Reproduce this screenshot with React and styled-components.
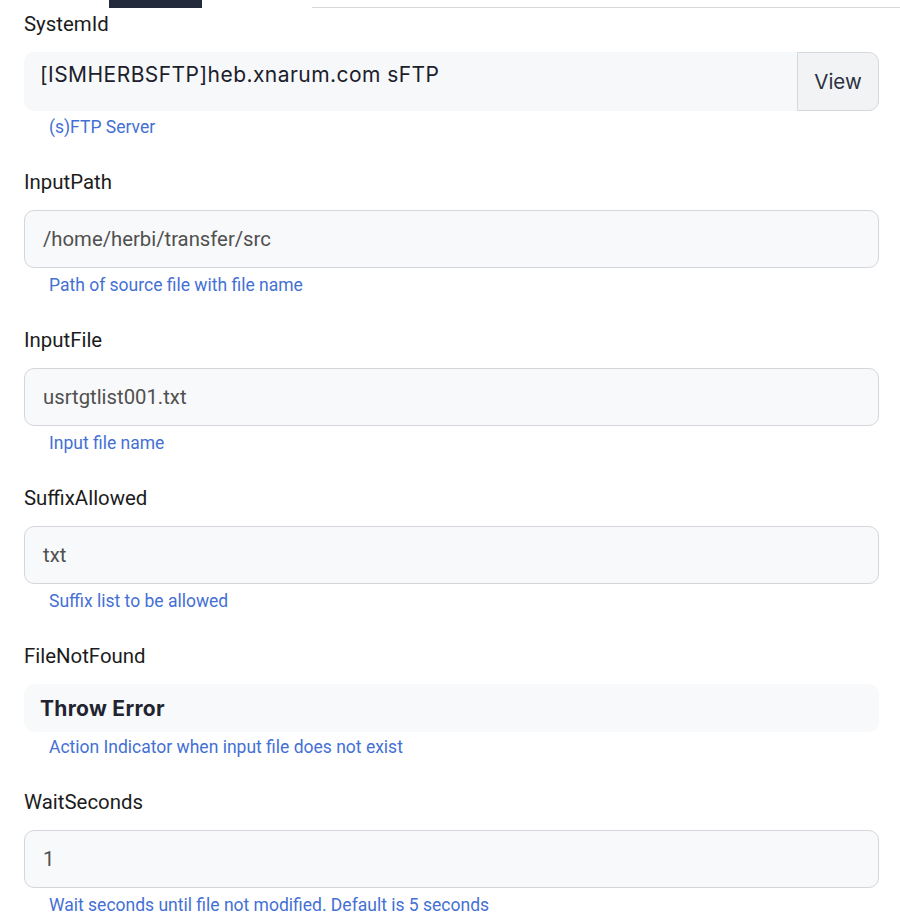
import React from "react";
import styled, { createGlobalStyle } from "styled-components";

const Global = createGlobalStyle`
  html, body { margin: 0; padding: 0; background: #ffffff; }
  body { font-family: Roboto, "Liberation Sans", sans-serif; }
`;

const Page = styled.div`
  width: 900px;
  box-sizing: border-box;
`;

const TabStrip = styled.div`
  display: flex;
  align-items: stretch;
  height: 8px;
  padding-left: 109px;
`;

const ActiveTab = styled.div`
  width: 93px;
  background: #222a3c;
`;

const TabLine = styled.div`
  flex: 1;
  margin-left: 110px;
  border-bottom: 1px solid #d6d8dc;
  height: 7px;
`;

const Form = styled.div`
  display: flex;
  flex-direction: column;
  gap: 31px;
  padding: 4px 21px 0 24px;
`;

const Field = styled.div`
  display: flex;
  flex-direction: column;
`;

const Label = styled.div`
  font-family: Roboto, sans-serif;
  font-size: 20.4px;
  line-height: 24px;
  color: #1c1c1c;
  margin-bottom: ${(p) => p.$gap ?? 16}px;
`;

const Input = styled.div`
  box-sizing: border-box;
  height: 58px;
  display: flex;
  align-items: center;
  padding: 0 18px;
  background: #f8f9fa;
  border: 1.5px solid #d3d6db;
  border-radius: 10px;
  font-family: Roboto, sans-serif;
  font-size: 20.3px;
  color: #505050;
`;

const Group = styled.div`
  display: flex;
  height: 59px;
  background: #f7f8fa;
  border-radius: 10px;
`;

const GroupValue = styled.div`
  flex: 1;
  padding: 11px 16px;
  font-family: Inter, sans-serif;
  font-size: 21px;
  line-height: 24px;
  color: #1b202b;
  letter-spacing: 0.45px;
`;

const ViewButton = styled.div`
  box-sizing: border-box;
  width: 82px;
  display: flex;
  align-items: center;
  justify-content: center;
  background: #f2f3f5;
  border: 1px solid #d5d8dd;
  border-radius: 0 10px 10px 0;
  font-family: Inter, sans-serif;
  font-size: 20.5px;
  color: #2b3240;
`;

const Display = styled.div`
  box-sizing: border-box;
  height: 48px;
  display: flex;
  align-items: center;
  padding: 0 16px;
  background: #f8f9fa;
  border-radius: 10px;
  font-family: Inter, sans-serif;
  font-weight: 700;
  font-size: 21px;
  letter-spacing: 0.3px;
  color: #1f2430;
`;

const Help = styled.div`
  margin-top: ${(p) => p.$gap ?? 5}px;
  padding-left: 25px;
  font-family: Roboto, sans-serif;
  font-size: 17.5px;
  line-height: 24px;
  color: #4470d4;
`;

const inputs = [
  { label: "InputPath", value: "/home/herbi/transfer/src", help: "Path of source file with file name" },
  { label: "InputFile", value: "usrtgtlist001.txt", help: "Input file name" },
  { label: "SuffixAllowed", value: "txt", help: "Suffix list to be allowed" },
];

export default function App() {
  return (
    <Page>
      <Global />
      <TabStrip>
        <ActiveTab />
        <TabLine />
      </TabStrip>
      <Form>
        <Field>
          <Label>SystemId</Label>
          <Group>
            <GroupValue>[ISMHERBSFTP]heb.xnarum.com sFTP</GroupValue>
            <ViewButton>View</ViewButton>
          </Group>
          <Help $gap={4}>(s)FTP Server</Help>
        </Field>
        {inputs.map((f) => (
          <Field key={f.label}>
            <Label>{f.label}</Label>
            <Input>{f.value}</Input>
            <Help $gap={5}>{f.help}</Help>
          </Field>
        ))}
        <Field>
          <Label>FileNotFound</Label>
          <Display>Throw Error</Display>
          <Help $gap={3}>Action Indicator when input file does not exist</Help>
        </Field>
        <Field>
          <Label>WaitSeconds</Label>
          <Input>1</Input>
          <Help>Wait seconds until file not modified. Default is 5 seconds</Help>
        </Field>
      </Form>
    </Page>
  );
}
